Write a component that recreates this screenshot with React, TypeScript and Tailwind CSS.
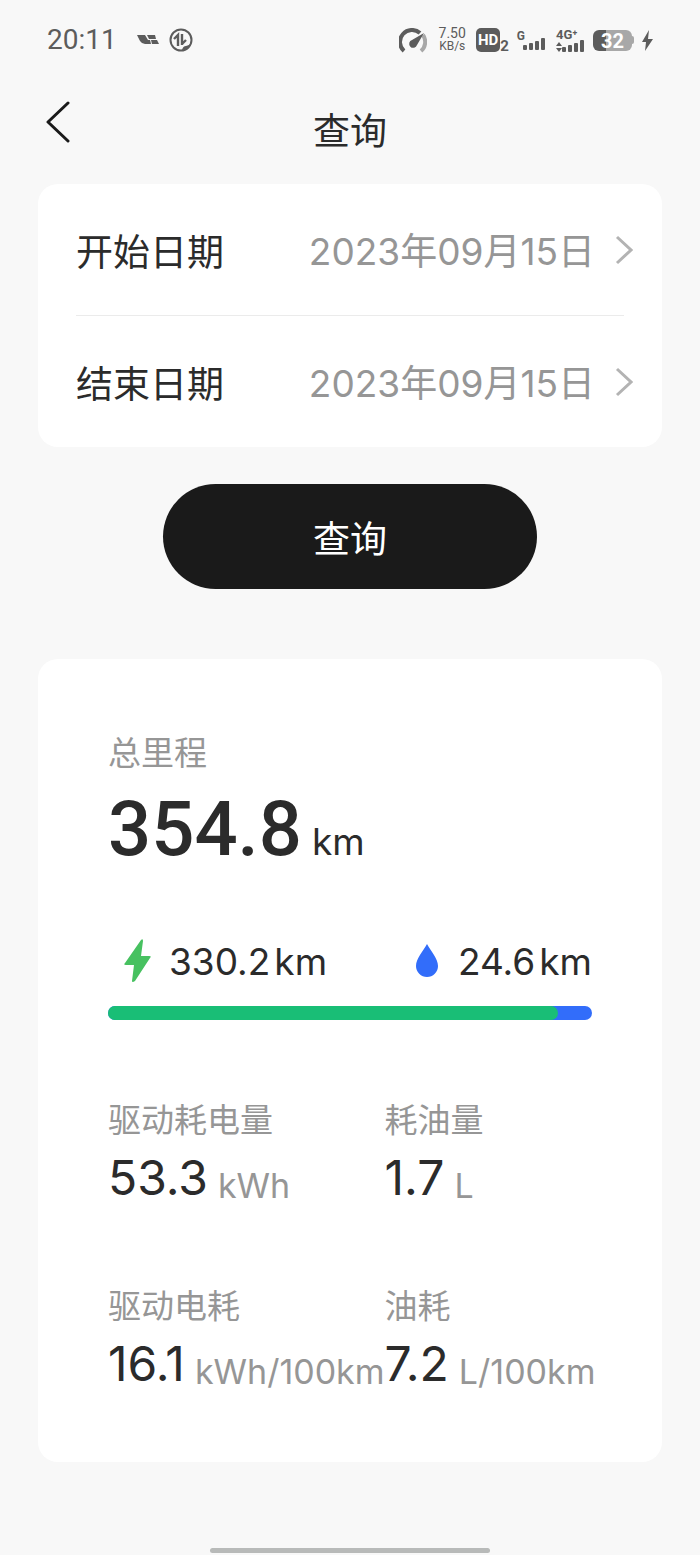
import React from "react";

interface DateRowProps {
  label: string;
  value: string;
}

interface StatProps {
  label: string;
  value: string;
  unit: string;
}

const electricKm = 330.2;
const fuelKm = 24.6;

const stats: StatProps[] = [
  { label: "驱动耗电量", value: "53.3", unit: "kWh" },
  { label: "耗油量", value: "1.7", unit: "L" },
  { label: "驱动电耗", value: "16.1", unit: "kWh/100km" },
  { label: "油耗", value: "7.2", unit: "L/100km" },
];

function SignalBars() {
  return (
    <svg width="23" height="12" viewBox="0 0 23 12" fill="currentColor" aria-hidden="true">
      <rect x="0" y="7" width="4" height="5" rx="1" />
      <rect x="6" y="5" width="4" height="7" rx="1" />
      <rect x="12" y="3" width="4" height="9" rx="1" />
      <rect x="18" y="0" width="4" height="12" rx="1" />
    </svg>
  );
}

function StatusBar() {
  return (
    <div className="flex h-20 items-center pr-[47px] pl-[47px] text-[#5c5c5c]">
      <span className="text-[28px] leading-10">20:11</span>
      <svg className="ml-5 shrink-0" width="22" height="10" viewBox="0 0 22 10" fill="currentColor" aria-hidden="true">
        <path d="M0 0h8l3 5h2l1 4H8Q5 9 3 6Z" />
        <path d="M10 0h8l1 4h-7Z" />
        <path d="M14 5h6l2 4h-7Z" />
      </svg>
      <svg className="ml-[10px] shrink-0" width="24" height="24" viewBox="0 0 24 24" fill="none" stroke="currentColor" aria-hidden="true">
        <circle cx="12" cy="12" r="10.5" strokeWidth="2" />
        <path d="M5 11l4-4v11M13 6v11M13 16l4-4" strokeWidth="2.4" />
        <path d="M13 22q1-4 4-4 3 0 5-3-1 6-9 7Z" fill="currentColor" stroke="none" />
      </svg>

      <div className="ml-auto flex items-center">
        <svg className="shrink-0" width="28" height="25" viewBox="0 0 28 25" fill="none" aria-hidden="true">
          <path d="M24 7A12 12 0 0 1 22 23" stroke="#a8a8a8" strokeWidth="4" />
          <path d="M5 23A12 12 0 0 1 21 5" stroke="currentColor" strokeWidth="4" />
          <path d="M25 5L18 17a4 4 0 1 1-5-5Z" fill="currentColor" />
        </svg>
        <div className="ml-[10px] w-[30px] text-center leading-[13px]">
          <div className="text-[14px]">7.50</div>
          <div className="text-[12px]">KB/s</div>
        </div>
        <div className="ml-[9px] flex items-end">
          <span className="w-6 rounded-[5px] bg-[#5c5c5c] text-center text-[15px] leading-6 font-bold text-white">HD</span>
          <span className="text-[15px] leading-[12px] font-bold">2</span>
        </div>
        <div className="ml-2 flex">
          <span className="text-[12px] leading-[12px] font-bold">G</span>
          <div className="mt-2 -ml-0.5">
            <SignalBars />
          </div>
        </div>
        <div className="ml-[10px] flex flex-col">
          <span className="text-[13px] leading-[11px] font-bold">4G⁺</span>
          <div className="flex items-end">
            <svg width="6" height="10" viewBox="0 0 6 10" fill="currentColor" aria-hidden="true">
              <path d="M3 0l3 4H0ZM3 10l3-4H0Z" />
            </svg>
            <SignalBars />
          </div>
        </div>
        <div className="ml-2 flex items-center">
          <div className="h-[21px] w-[39px] rounded-md bg-linear-to-r from-[#5c5c5c] from-33% to-[#a8a8a8] to-33% text-center text-[20px] leading-[22px] font-bold text-white">
            32
          </div>
          <div className="h-2 w-[2px] rounded-r bg-[#a8a8a8]" />
        </div>
        <svg className="ml-2 shrink-0" width="11" height="21" viewBox="0 0 11 21" fill="currentColor" aria-hidden="true">
          <path d="M7 0L0 12h4L3 21 11 9H6Z" />
        </svg>
      </div>
    </div>
  );
}

function DateRow({ label, value }: DateRowProps) {
  return (
    <button type="button" className="flex h-[131px] w-full items-center pr-[29px] pl-[38px] text-[37px] leading-[56px]">
      <span className="pt-1.5">{label}</span>
      <span className="ml-auto pt-1 text-[#969696]">{value}</span>
      <svg className="ml-5 shrink-0" width="18" height="30" viewBox="0 0 18 30" fill="none" stroke="#b3b3b3" strokeWidth="3" aria-hidden="true">
        <path d="M2 2l14 13L2 28" />
      </svg>
    </button>
  );
}

function Stat({ label, value, unit }: StatProps) {
  return (
    <div className="whitespace-nowrap">
      <div className="text-[33px] leading-[48px] text-[#969696]">{label}</div>
      <div className="mt-1.5 flex items-end gap-[10px]">
        <span className="text-[48px] leading-[56px]">{value}</span>
        <span className="text-[34px] leading-10 text-[#969696]">{unit}</span>
      </div>
    </div>
  );
}

function App() {
  const electricShare = (electricKm / (electricKm + fuelKm)) * 100;

  return (
    <div className="flex min-h-screen flex-col bg-[#f8f8f8] font-['Inter','Noto_Sans_CJK_SC',sans-serif] text-[#2b2b2b]">
      <div className="font-['Roboto',sans-serif]">
        <StatusBar />
      </div>

      <header className="grid h-[104px] grid-cols-3 items-center px-[38px]">
        <button type="button" aria-label="返回" className="w-10 pb-5 pl-2">
          <svg width="24" height="42" viewBox="0 0 24 42" fill="none" stroke="#1a1a1a" strokeWidth="3" strokeLinecap="round" strokeLinejoin="round" aria-hidden="true">
            <path d="M22 2L2 21l20 19" />
          </svg>
        </button>
        <h1 className="text-center text-[37px] leading-[56px]">查询</h1>
      </header>

      <main className="px-[38px]">
        <section className="rounded-[20px] bg-white">
          <DateRow label="开始日期" value="2023年09月15日" />
          <div className="mx-[38px] h-px bg-[#ebebeb]" />
          <DateRow label="结束日期" value="2023年09月15日" />
        </section>

        <button type="button" className="mx-auto mt-[37px] block h-[105px] w-3/5 rounded-full bg-[#1a1a1a] pt-1.5 text-[37px] text-white">
          查询
        </button>

        <section className="mt-[70px] rounded-[20px] bg-white p-[70px]">
          <div className="text-[33px] leading-[48px] text-[#969696]">总里程</div>
          <div className="mt-2 flex items-baseline gap-[10px]">
            <span className="font-['Roboto',sans-serif] text-[76px] leading-[88px] font-medium">354.8</span>
            <span className="text-[37px] leading-[48px]">km</span>
          </div>

          <div className="mt-[65px] flex items-center justify-between text-[37px] leading-[48px]">
            <div className="flex items-center pl-4">
              <svg className="mr-[18px] mb-1" width="27" height="43" viewBox="0 0 27 43" fill="#47c160" aria-hidden="true">
                <path d="M17 1Q19-1 19 2L17 17h8q3 0 1 2L11 42q-3 2-3 0l2-16H2q-3 0-1-2Z" />
              </svg>
              <span className="mr-1">{electricKm}</span>
              <span>km</span>
            </div>
            <div className="flex items-center">
              <svg className="mr-5 mb-1" width="22" height="33" viewBox="0 0 22 33" fill="#326dfa" aria-hidden="true">
                <path d="M11 0C15 7 22 15 22 22a11 11 0 0 1-22 0C0 15 7 7 11 0Z" />
              </svg>
              <span className="mr-1">{fuelKm}</span>
              <span>km</span>
            </div>
          </div>

          <div className="mt-5 h-[14px] overflow-hidden rounded-full bg-[#326dfa]">
            <div className="h-full rounded-r-full bg-[#19be76]" style={{ width: `${electricShare}%` }} />
          </div>

          <div className="mt-[76px] grid grid-cols-[minmax(0,4fr)_minmax(0,3fr)] gap-y-[76px]">
            {stats.map((item) => (
              <Stat key={item.label} {...item} />
            ))}
          </div>
        </section>
      </main>

      <div className="mx-auto mt-auto mb-[2px] h-[5px] w-2/5 rounded-full bg-[#b8bab9]" />
    </div>
  );
}

export default App;
